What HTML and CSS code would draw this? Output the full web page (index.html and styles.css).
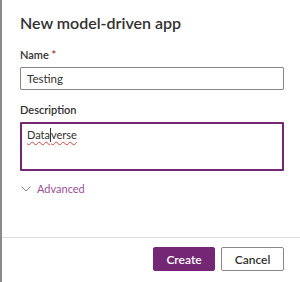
FILE: index.html
```html
<!DOCTYPE html>
<html lang="en">
<head>
  <meta charset="UTF-8">
  <meta name="viewport" content="width=device-width, initial-scale=1.0">
  <title>New model-driven app</title>
  <link rel="stylesheet" href="styles.css">
</head>
<body>
  <div class="app-dialog">
    <div class="dialog-body">
      <h1 class="dialog-title">New model-driven app</h1>

      <label class="field-label" for="appName">Name <span class="required">*</span></label>
      <div class="text-input" id="appName">Testing</div>

      <label class="field-label desc-label" for="appDesc">Description</label>
      <div class="text-area" id="appDesc"><span class="spell">Data<span class="caret"></span>verse</span></div>

      <div class="advanced-toggle">
        <svg class="chevron" width="10" height="6" viewBox="0 0 10 6">
          <path d="M0.5 0.5 L5 5 L9.5 0.5" fill="none" stroke="#8a8886" stroke-width="1"/>
        </svg>
        <span>Advanced</span>
      </div>
    </div>

    <div class="dialog-footer">
      <button class="btn btn-primary">Create</button>
      <button class="btn btn-default">Cancel</button>
    </div>
  </div>
</body>
</html>
```

FILE: styles.css
```css
* {
  box-sizing: border-box;
}

body {
  margin: 0;
  background-color: #ffffff;
  font-family: Lato, "Open Sans", sans-serif;
  color: #323130;
}

.app-dialog {
  width: 300px;
  height: 282px;
  border-left: 2px solid #8a8a8a;
  display: flex;
  flex-direction: column;
}

.dialog-body {
  flex: 1;
  padding: 12px 16px 0 18px;
}

.dialog-title {
  margin: 0 0 13px;
  font-size: 16px;
  line-height: 22px;
  font-weight: 600;
  color: #323130;
}

.field-label {
  display: block;
  font-size: 11px;
  line-height: 16px;
  font-weight: 600;
  margin-bottom: 4px;
}

.required {
  color: #a4262c;
}

.desc-label {
  margin-top: 12px;
}

.text-input {
  height: 23px;
  border: 1px solid #8a8886;
  border-radius: 1px;
  padding: 0 6px;
  font-size: 11.5px;
  line-height: 21px;
}

.text-area {
  height: 49px;
  border: 2px solid #742774;
  border-radius: 1px;
  padding: 3px 5px 0;
  font-size: 11px;
  line-height: 16px;
}

.spell {
  text-decoration: underline wavy #e04040;
  text-decoration-thickness: 1px;
  text-underline-offset: 2px;
}

.caret {
  display: inline-block;
  width: 0;
  height: 14px;
  border-left: 1px solid #323130;
  vertical-align: -3px;
}

.advanced-toggle {
  display: flex;
  align-items: center;
  gap: 6px;
  margin-top: 10px;
  padding-left: 1px;
  font-size: 11px;
  line-height: 16px;
  color: #9b4f9b;
}

.chevron {
  display: block;
}

.dialog-footer {
  height: 45px;
  border-top: 1px solid #e1dfdd;
  display: flex;
  justify-content: flex-end;
  align-items: flex-start;
  gap: 6px;
  padding: 9px 16px 0 0;
}

.btn {
  height: 24px;
  border-radius: 2px;
  font-family: Lato, "Open Sans", sans-serif;
  font-size: 12px;
  font-weight: 600;
  padding: 0;
  cursor: pointer;
}

.btn-primary {
  width: 62px;
  background-color: #742774;
  border: 1px solid #742774;
  color: #ffffff;
}

.btn-default {
  width: 63px;
  background-color: #ffffff;
  border: 1px solid #8a8886;
  color: #323130;
}
```
